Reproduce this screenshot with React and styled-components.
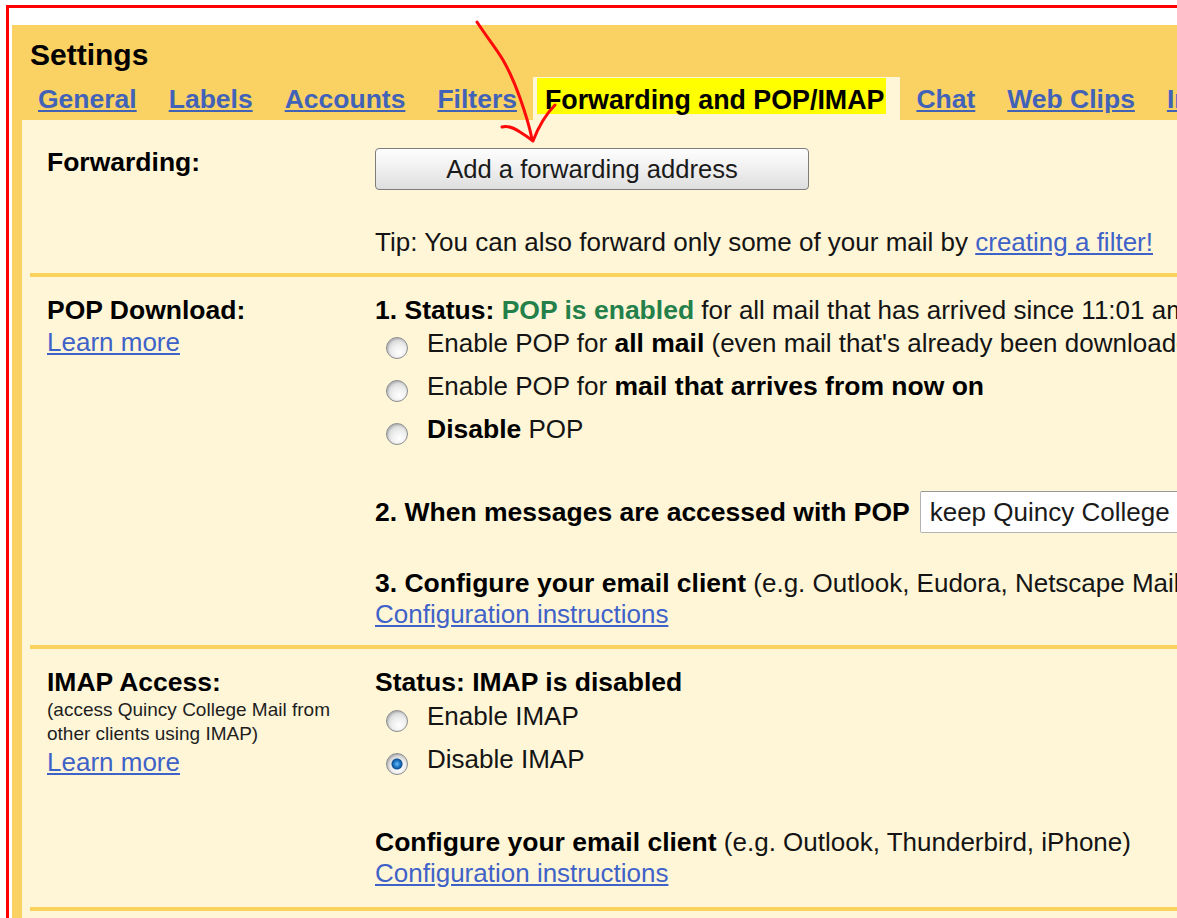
import React from "react";
import styled, { createGlobalStyle } from "styled-components";

const GlobalStyle = createGlobalStyle`
  html, body {
    margin: 0;
    padding: 0;
    overflow: hidden;
    background: #ffffff;
  }
  body {
    font-family: "Liberation Sans", Arial, sans-serif;
    color: #141414;
  }
  #root {
    width: 1177px;
    height: 918px;
    overflow: hidden;
    position: relative;
  }
`;

const YELLOW = "#fad264";
const CREAM = "#fff6d8";
const RULE = "#fbd25c";

const Page = styled.div`
  position: relative;
  width: 1177px;
  height: 918px;
  overflow: hidden;
`;

const Frame = styled.div`
  box-sizing: border-box;
  margin: 5px 0 0 6px;
  width: 1400px;
  height: 1000px;
  border: 3px solid #ff0000;
  padding: 17px 0 0 3px;
  background: #ffffff;
`;

const Panel = styled.div`
  height: 100%;
  background: ${YELLOW};
  padding: 12px 0 0 10px;
`;

const Title = styled.h1`
  margin: 0;
  padding-left: 8px;
  font-size: 30px;
  line-height: 36px;
  font-weight: bold;
  color: #000;
`;

const TabRow = styled.nav`
  display: flex;
  height: 43px;
  margin-top: 4px;
`;

const Tab = styled.a`
  display: block;
  padding: 2px 16px 0;
  line-height: 41px;
  font-size: 26.5px;
  font-weight: bold;
  color: #4262b8;
  text-decoration: underline;
  text-underline-offset: 2px;
  white-space: nowrap;
`;

const ActiveTab = styled.span`
  display: block;
  padding: 1px 14px 0 4px;
  line-height: 41px;
  font-size: 26.8px;
  font-weight: bold;
  color: #000;
  background: ${CREAM};
  white-space: nowrap;
`;

const Highlight = styled.span`
  display: inline-block;
  background: #ffff00;
  padding: 8px 2px 0 8px;
  line-height: 28px;
`;

const Content = styled.div`
  background: ${CREAM};
  padding-left: 8px;
  height: 100%;
`;

const Section = styled.section`
  display: grid;
  grid-template-columns: 328px 1fr;
  padding: ${(p) => p.$top}px 0 ${(p) => p.$bottom}px 17px;
  border-top: ${(p) => (p.$first ? "none" : `4px solid ${RULE}`)};
  border-bottom: ${(p) => (p.$last ? `4px solid ${RULE}` : "none")};
`;

const LabelCol = styled.div`
  display: flex;
  flex-direction: column;
`;

const Label = styled.div`
  font-size: 26.5px;
  font-weight: bold;
  line-height: 32px;
  color: #000;
  white-space: nowrap;
`;

const Note = styled.div`
  font-size: 19px;
  line-height: 24px;
  color: #1e1e1e;
  max-width: 300px;
`;

const Link = styled.a`
  color: #3f62c8;
  text-decoration: underline;
  text-underline-offset: 2px;
  cursor: pointer;
`;

const LinkLine = styled.div`
  font-size: 26px;
  line-height: ${(p) => p.$lh || 32}px;
  white-space: nowrap;
`;

const ValueCol = styled.div`
  display: flex;
  flex-direction: column;
  align-items: flex-start;
  font-size: 26px;
  white-space: nowrap;
`;

const Line = styled.div`
  line-height: ${(p) => p.$lh || 32}px;
  margin-top: ${(p) => p.$mt || 0}px;
  white-space: nowrap;
`;

const B = styled.b`
  font-size: 26.5px;
  color: #000;
`;

const Green = styled.b`
  font-size: 26.5px;
  color: #24804a;
`;

const Button = styled.button`
  margin-top: 2px;
  width: 434px;
  height: 42px;
  border: 1px solid #7d7d7d;
  border-radius: 4px;
  background: linear-gradient(#fefefe 0%, #f1f1f1 45%, #dedede 100%);
  box-shadow: inset 0 1px 0 #ffffff;
  font-family: "Liberation Sans", Arial, sans-serif;
  font-size: 25.6px;
  color: #1a1a1a;
  padding: 0;
`;

const RadioList = styled.div`
  display: flex;
  flex-direction: column;
  margin-top: ${(p) => p.$mt || 0}px;
`;

const RadioRow = styled.label`
  display: flex;
  align-items: flex-start;
  height: 43px;
  line-height: 30px;
  white-space: nowrap;
`;

const Radio = styled.input.attrs({ type: "radio", readOnly: true })`
  appearance: none;
  -webkit-appearance: none;
  box-sizing: border-box;
  width: 22px;
  height: 22px;
  margin: 9px 19px 0 11px;
  flex: none;
  border-radius: 50%;
  border: 1px solid #8a8c8e;
  background: ${(p) =>
    p.checked
      ? "radial-gradient(circle at 50% 50%, #6cc0f4 0px, #1f79c9 3px, #0f4f92 5px, rgba(15,79,146,0) 6px), radial-gradient(circle at 60% 70%, #ffffff 0%, #eeeeee 40%, #bcbec0 100%)"
      : "radial-gradient(circle at 62% 72%, #ffffff 0%, #efefef 38%, #c0c2c4 100%)"};
  box-shadow: inset 1px 1px 2px rgba(0, 0, 0, 0.2);
`;

const SelectRow = styled.div`
  display: flex;
  align-items: center;
  height: 42px;
  margin-top: ${(p) => p.$mt || 0}px;
  line-height: 30px;
`;

const Select = styled.select`
  appearance: none;
  -webkit-appearance: none;
  margin-left: 10px;
  height: 42px;
  padding: 0 9px;
  border: 1px solid #b4b4b4;
  border-top-color: #979797;
  border-radius: 2px;
  background: #ffffff;
  font-family: "Liberation Sans", Arial, sans-serif;
  font-size: 26px;
  color: #1a1a1a;
`;

const Annotation = styled.svg`
  position: absolute;
  left: 0;
  top: 0;
  width: 1177px;
  height: 918px;
  pointer-events: none;
`;

const tabs = ["General", "Labels", "Accounts", "Filters"];
const tabsAfter = ["Chat", "Web Clips", "Importing"];

export default function App() {
  return (
    <Page>
      <GlobalStyle />
      <Frame>
        <Panel>
          <Title>Settings</Title>
          <TabRow>
            {tabs.map((t) => (
              <Tab key={t}>{t}</Tab>
            ))}
            <ActiveTab>
              <Highlight>Forwarding and POP/IMAP</Highlight>
            </ActiveTab>
            {tabsAfter.map((t) => (
              <Tab key={t}>{t}</Tab>
            ))}
          </TabRow>

          <Content>
            <Section $first $top={26} $bottom={15}>
              <LabelCol>
                <Label>Forwarding:</Label>
              </LabelCol>
              <ValueCol>
                <Button>Add a forwarding address</Button>
                <Line $mt={36}>
                  Tip: You can also forward only some of your mail by{" "}
                  <Link>creating a filter!</Link>
                </Line>
              </ValueCol>
            </Section>

            <Section $top={17} $bottom={15}>
              <LabelCol>
                <Label>POP Download:</Label>
                <LinkLine>
                  <Link>Learn more</Link>
                </LinkLine>
              </LabelCol>
              <ValueCol>
                <Line>
                  <B>1. Status: </B>
                  <Green>POP is enabled</Green> for all mail that has arrived
                  since 11:01 am
                </Line>
                <RadioList $mt={2}>
                  <RadioRow>
                    <Radio name="pop" checked={false} />
                    <span>
                      Enable POP for <B>all mail</B> (even mail that's already
                      been downloaded)
                    </span>
                  </RadioRow>
                  <RadioRow>
                    <Radio name="pop" checked={false} />
                    <span>
                      Enable POP for <B>mail that arrives from now on</B>
                    </span>
                  </RadioRow>
                  <RadioRow>
                    <Radio name="pop" checked={false} />
                    <span>
                      <B>Disable</B> POP
                    </span>
                  </RadioRow>
                </RadioList>
                <SelectRow $mt={34}>
                  <B>2. When messages are accessed with POP</B>
                  <Select defaultValue="keep">
                    <option value="keep">
                      keep Quincy College Mail's copy in the Inbox
                    </option>
                  </Select>
                </SelectRow>
                <Line $mt={35} $lh={31}>
                  <B>3. Configure your email client</B> (e.g. Outlook, Eudora,
                  Netscape Mail)
                </Line>
                <LinkLine $lh={31}>
                  <Link>Configuration instructions</Link>
                </LinkLine>
              </ValueCol>
            </Section>

            <Section $last $top={17} $bottom={18}>
              <LabelCol>
                <Label>IMAP Access:</Label>
                <Note>(access Quincy College Mail from other clients using IMAP)</Note>
                <LinkLine>
                  <Link>Learn more</Link>
                </LinkLine>
              </LabelCol>
              <ValueCol>
                <Line>
                  <B>Status: IMAP is disabled</B>
                </Line>
                <RadioList $mt={3}>
                  <RadioRow>
                    <Radio name="imap" checked={false} />
                    <span>Enable IMAP</span>
                  </RadioRow>
                  <RadioRow>
                    <Radio name="imap" checked={true} />
                    <span>Disable IMAP</span>
                  </RadioRow>
                </RadioList>
                <Line $mt={40} $lh={31}>
                  <B>Configure your email client</B> (e.g. Outlook, Thunderbird,
                  iPhone)
                </Line>
                <LinkLine $lh={31}>
                  <Link>Configuration instructions</Link>
                </LinkLine>
              </ValueCol>
            </Section>
          </Content>
        </Panel>
      </Frame>

      {/* hand-drawn red pointer towards the forwarding button */}
      <Annotation viewBox="0 0 1177 918">
        <g
          fill="none"
          stroke="#ff0a0a"
          strokeWidth="3"
          strokeLinecap="round"
          strokeLinejoin="round"
        >
          <path d="M477 22 C 486 36, 496 48, 503 60 C 510 72, 515 84, 520 98 C 525 112, 529 124, 532 139" />
          <path d="M502 127 C 508 125, 514 128, 520 132 C 525 135, 529 138, 533 141 C 538 128, 545 115, 555 105" />
        </g>
      </Annotation>
    </Page>
  );
}
